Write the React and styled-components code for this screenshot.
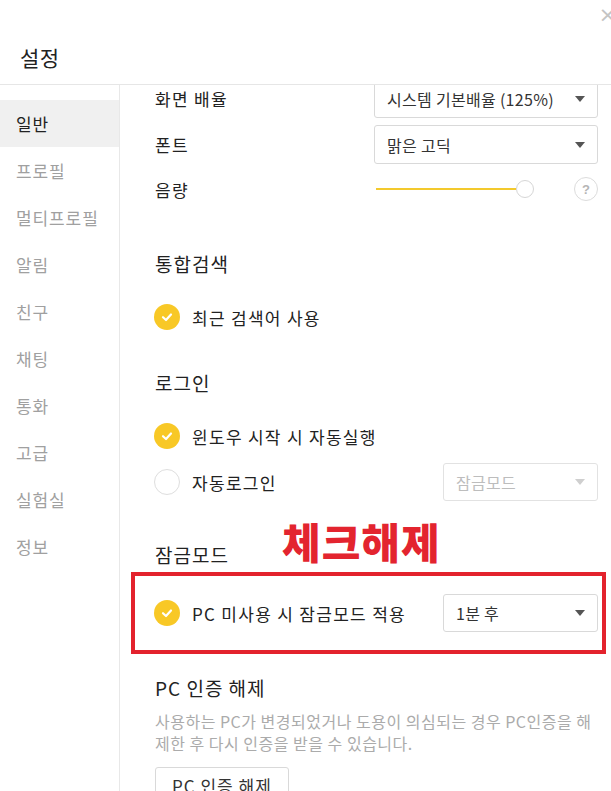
import React from 'react';
import styled, { createGlobalStyle } from 'styled-components';

const Global = createGlobalStyle`
  html, body { margin: 0; padding: 0; background: #fff; }
  body { font-family: "Noto Sans CJK KR", "Noto Sans", sans-serif; color: #222; }
  * { box-sizing: border-box; }
`;

const menu = ['일반', '프로필', '멀티프로필', '알림', '친구', '채팅', '통화', '고급', '실험실', '정보'];

export default function App() {
  return (
    <Window>
      <Global />
      <Header>
        <Title>설정</Title>
        <Close>×</Close>
      </Header>
      <Body>
        <Sidebar>
          {menu.map((m, i) => (
            <MenuItem key={m} active={i === 0}>{m}</MenuItem>
          ))}
        </Sidebar>
        <Content>
          <Inner>
            <Row>
              <Label>화면 배율</Label>
              <Select>시스템 기본배율 (125%)<Arrow /></Select>
            </Row>
            <Row>
              <Label>폰트</Label>
              <Select>맑은 고딕<Arrow /></Select>
            </Row>
            <SliderRow>
              <Label>음량</Label>
              <SliderWrap>
                <Track />
                <Thumb />
                <Help>?</Help>
              </SliderWrap>
            </SliderRow>

            <Heading top={44}>통합검색</Heading>
            <CheckRow top={21}>
              <Check checked /> <CheckText>최근 검색어 사용</CheckText>
            </CheckRow>

            <Heading top={34}>로그인</Heading>
            <CheckRow top={21}>
              <Check checked /> <CheckText>윈도우 시작 시 자동실행</CheckText>
            </CheckRow>
            <CheckRow top={8}>
              <Check /> <CheckText>자동로그인</CheckText>
              <SmallSelect disabled>잠금모드<Arrow disabled /></SmallSelect>
            </CheckRow>

            <Heading top={41}>
              잠금모드
              <Note>체크해제</Note>
            </Heading>
            <Highlight>
              <CheckRow top={0}>
                <Check checked /> <CheckText>PC 미사용 시 잠금모드 적용</CheckText>
                <SmallSelect>1분 후<Arrow /></SmallSelect>
              </CheckRow>
            </Highlight>

            <Heading top={21}>PC 인증 해제</Heading>
            <Desc>
              사용하는 PC가 변경되었거나 도용이 의심되는 경우 PC인증을 해<br />
              제한 후 다시 인증을 받을 수 있습니다.
            </Desc>
            <Button>PC 인증 해제</Button>
          </Inner>
        </Content>
      </Body>
    </Window>
  );
}

function Check({ checked }) {
  return (
    <Circle checked={checked}>
      {checked && (
        <svg width="14" height="14" viewBox="0 0 14 14">
          <path d="M3 7.2 L6 10 L11 4.5" fill="none" stroke="#fff" strokeWidth="2.2" strokeLinecap="round" strokeLinejoin="round" />
        </svg>
      )}
    </Circle>
  );
}

const Window = styled.div`
  width: 611px;
  height: 791px;
  overflow: hidden;
  display: flex;
  flex-direction: column;
  position: relative;
`;

const Header = styled.div`
  height: 85px;
  flex: none;
  border-bottom: 1px solid #e6e6e6;
  display: flex;
  align-items: center;
  padding: 0 0 0 20px;
`;

const Title = styled.div`
  font-size: 21px;
  letter-spacing: 0.5px;
  margin-top: 30px;
  color: #222;
`;

const Close = styled.div`
  position: absolute;
  top: 2px;
  right: -6px;
  font-size: 22px;
  color: #c4c4c4;
  font-family: "DejaVu Sans", sans-serif;
`;

const Body = styled.div`
  flex: 1;
  display: flex;
  min-height: 0;
`;

const Sidebar = styled.div`
  width: 120px;
  flex: none;
  border-right: 1px solid #e8e8e8;
  padding-top: 15px;
`;

const MenuItem = styled.div`
  height: 47px;
  display: flex;
  align-items: center;
  padding-left: 16px;
  font-size: 17px;
  letter-spacing: 0.9px;
  color: ${p => (p.active ? '#222' : '#a0a0a0')};
  background: ${p => (p.active ? '#f0f0f0' : 'transparent')};
`;

const Content = styled.div`
  flex: 1;
  overflow: hidden;
  padding: 0 13px 0 35px;
`;

const Inner = styled.div`
  margin-top: -6px;
  display: flex;
  flex-direction: column;
`;

const Row = styled.div`
  height: 39px;
  display: flex;
  align-items: center;
  justify-content: space-between;
  margin-bottom: 7px;
`;

const Label = styled.div`
  font-size: 17px;
  letter-spacing: 1.3px;
  color: #222;
`;

const Select = styled.div`
  width: 224px;
  height: 39px;
  border: 1px solid #d9d9d9;
  border-radius: 3px;
  display: flex;
  align-items: center;
  justify-content: space-between;
  padding: 0 12px 0 12px;
  font-size: 16px;
  letter-spacing: 0.3px;
  color: #333;
`;

const SmallSelect = styled(Select)`
  width: 155px;
  height: 38px;
  margin-left: auto;
  color: ${p => (p.disabled ? '#bdbdbd' : '#333')};
  border-color: ${p => (p.disabled ? '#e2e2e2' : '#d9d9d9')};
`;

const Arrow = styled.span`
  width: 0;
  height: 0;
  border-left: 5px solid transparent;
  border-right: 5px solid transparent;
  border-top: 6px solid ${p => (p.disabled ? '#cfcfcf' : '#555')};
`;

const SliderRow = styled.div`
  height: 36px;
  display: flex;
  align-items: center;
  justify-content: space-between;
`;

const SliderWrap = styled.div`
  width: 222px;
  height: 36px;
  display: flex;
  align-items: center;
`;

const Track = styled.div`
  width: 140px;
  height: 2px;
  background: #f3c92d;
`;

const Thumb = styled.div`
  width: 18px;
  height: 18px;
  border-radius: 50%;
  border: 1px solid #d6d6d6;
  background: #fff;
`;

const Help = styled.div`
  width: 24px;
  height: 24px;
  border-radius: 50%;
  border: 1px solid #dcdcdc;
  margin-left: auto;
  display: flex;
  align-items: center;
  justify-content: center;
  font-size: 13px;
  font-weight: bold;
  color: #b5b5b5;
  font-family: "Liberation Sans", sans-serif;
`;

const Heading = styled.div`
  position: relative;
  margin-top: ${p => p.top}px;
  height: 26px;
  line-height: 26px;
  font-size: 19px;
  letter-spacing: 1px;
  color: #222;
`;

const Note = styled.span`
  position: absolute;
  left: 127px;
  top: -22px;
  font-size: 42px;
  line-height: 42px;
  letter-spacing: 1px;
  font-weight: 900;
  color: #e3242f;
  white-space: nowrap;
`;

const CheckRow = styled.div`
  margin-top: ${p => p.top}px;
  height: 38px;
  display: flex;
  align-items: center;
`;

const Circle = styled.span`
  width: 26px;
  height: 26px;
  border-radius: 50%;
  flex: none;
  display: flex;
  align-items: center;
  justify-content: center;
  background: ${p => (p.checked ? '#f8c826' : '#fff')};
  border: ${p => (p.checked ? 'none' : '1px solid #dedede')};
  margin-left: -1px;
`;

const CheckText = styled.span`
  font-size: 17px;
  letter-spacing: 1.3px;
  color: #222;
  margin-left: 12px;
`;

const Highlight = styled.div`
  margin: 4px -8px 0 -24px;
  border: 4px solid #e3222d;
  padding: 18px 4px 18px 20px;
`;

const Desc = styled.div`
  margin-top: 9px;
  font-size: 16px;
  line-height: 22px;
  letter-spacing: 0.5px;
  color: #ababab;
  white-space: nowrap;
`;

const Button = styled.div`
  margin-top: 13px;
  align-self: flex-start;
  height: 36px;
  padding: 0 16px;
  border: 1px solid #d9d9d9;
  border-radius: 3px;
  display: flex;
  align-items: center;
  font-size: 17px;
  letter-spacing: 1px;
  color: #333;
`;
